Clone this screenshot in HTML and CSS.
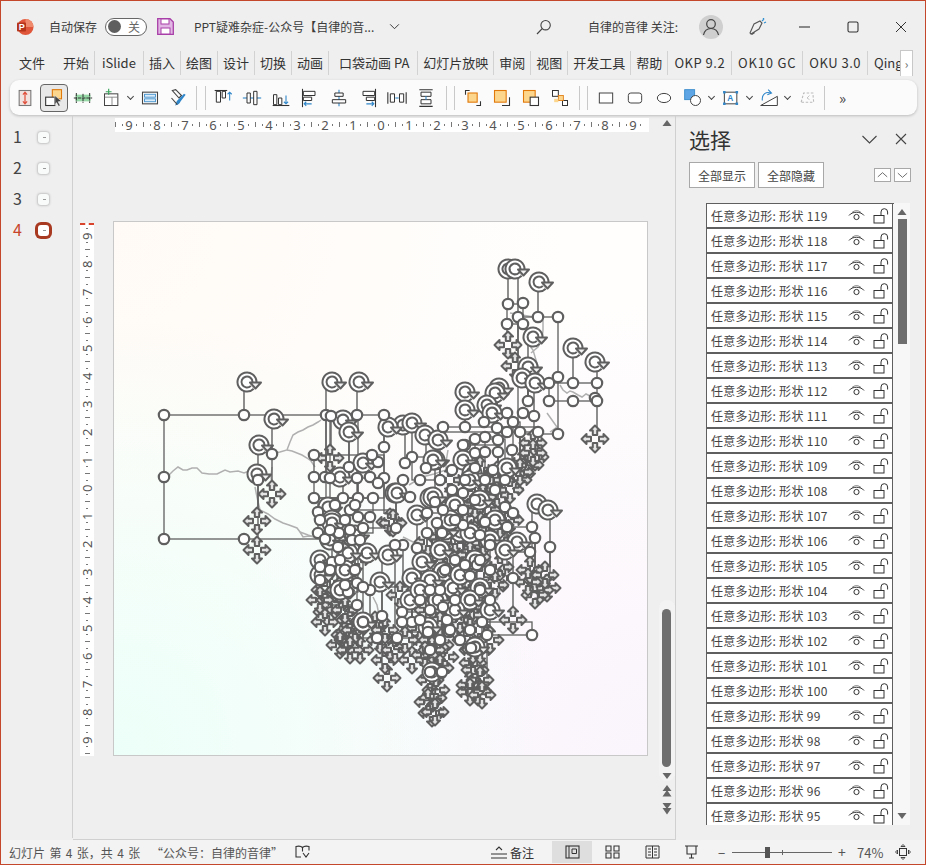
FILE: index.html
```html
<!DOCTYPE html>
<html lang="zh-CN">
<head>
<meta charset="utf-8">
<title>PPT疑难杂症</title>
<link rel="stylesheet" href="styles.css">
</head>
<body>
<svg class="defs" width="0" height="0">
  <defs>
    <symbol id="eye" viewBox="0 0 17 14"><path d="M1 6.5C4 2.2 13 2.2 16 6.5" fill="none" stroke="#333" stroke-width="1"/><path d="M4 3.5C7 1 10 1 13 3.5" fill="none" stroke="#333" stroke-width=".6"/><circle cx="8.5" cy="8" r="2.6" fill="none" stroke="#333" stroke-width="1"/></symbol>
    <symbol id="lock" viewBox="0 0 16 16"><rect x="1" y="7.5" width="10" height="7.5" fill="none" stroke="#333" stroke-width="1"/><path d="M8 7.5V4a3 3 0 0 1 6.6 0v2.5" fill="none" stroke="#333" stroke-width="1"/></symbol>
  </defs>
</svg>
<div class="window">
  <header class="titlebar">
    <svg class="logo" viewBox="0 0 18 18"><circle cx="9.5" cy="9" r="8" fill="#e0563a"/><path d="M9.5 1a8 8 0 0 1 8 8H9.5z" fill="#f08a6c"/><rect x="1" y="4.5" width="9" height="9" rx="1" fill="#b5341a"/><text x="2.8" y="12" class="logo-p">P</text></svg>
    <span class="autosave">自动保存</span>
    <span class="toggle"><i class="knob"></i><span>关</span></span>
    <svg class="save" viewBox="0 0 17 17"><path d="M.7.7H13L16.3 4v12.3H.7z" fill="#e2b6e4" stroke="#a83fa8" stroke-width="1.3"/><rect x="4" y="1" width="8" height="5" fill="#fff" stroke="#a83fa8"/><rect x="4" y="10" width="9" height="6" fill="#fff" stroke="#a83fa8"/></svg>
    <span class="doc-title">PPT疑难杂症-公众号【自律的音...</span>
    <svg class="chev" viewBox="0 0 12 8"><path d="M1 1.500l5 5 5-5" fill="none" stroke="#333" stroke-width="1.100"/></svg>
    <svg class="search" viewBox="0 0 16 16"><circle cx="9.600" cy="6.200" r="4.700" fill="none" stroke="#444" stroke-width="1.100"/><path d="M6.200 9.600L1 15" stroke="#444" stroke-width="1.200"/></svg>
    <span class="follow">自律的音律 关注:</span>
    <span class="avatar"><svg viewBox="0 0 24 24"><circle cx="12" cy="9" r="4.300" fill="none" stroke="#444" stroke-width="1.200"/><path d="M4.500 20c1-5 4-6.500 7.500-6.500s6.500 1.500 7.500 6.500" fill="none" stroke="#444" stroke-width="1.200"/></svg></span>
    <svg class="pen" viewBox="0 0 18 18"><path d="M1 15l4-9 6-3 2 2-3 6-8 5z" fill="none" stroke="#555" stroke-width="1.100"/><path d="M2 16l3-2 1 1-3 2z" fill="#555"/><path d="M13 3l2-2M15 5l2-1M14 1l1-1" stroke="#2f8fd0" stroke-width="1.200"/></svg>
    <svg class="win min" viewBox="0 0 12 12"><path d="M0 6h11" stroke="#333" stroke-width="1.100"/></svg>
    <svg class="win max" viewBox="0 0 12 12"><rect x="1" y="1" width="10" height="10" rx="1.500" fill="none" stroke="#333" stroke-width="1.100"/></svg>
    <svg class="win close" viewBox="0 0 12 12"><path d="M1 1l10 10M11 1L1 11" stroke="#333" stroke-width="1"/></svg>
  </header>

  <nav class="tabs">
    <span class="tab first">文件</span><span class="tab">开始</span><span class="tab islide">iSlide</span><span class="tab">插入</span><span class="tab">绘图</span><span class="tab">设计</span><span class="tab">切换</span><span class="tab">动画</span><span class="tab wide">口袋动画 PA</span><span class="tab">幻灯片放映</span><span class="tab">审阅</span><span class="tab">视图</span><span class="tab">开发工具</span><span class="tab">帮助</span><span class="tab lat">OKP 9.2</span><span class="tab lat ok10">OK10 GC</span><span class="tab lat">OKU 3.0</span><span class="tab clip">Qing</span>
    <span class="tab-more">›</span>
  </nav>

  <div class="toolbar">
    <span class="tb"><svg viewBox="0 0 24 24"><rect x="5" y="3" width="14" height="18" fill="#f1e3e0" stroke="#777" stroke-width="1.300"/><path d="M12 5v14M9.500 8L12 5l2.500 3M9.500 16l2.500 3 2.500-3" fill="none" stroke="#e0503c" stroke-width="1.500"/></svg></span>
    <span class="tb sel"><svg viewBox="0 0 24 24"><rect x="10" y="2" width="11" height="11" fill="#fcd68c" stroke="#e0780a" stroke-width="1.300"/><rect x="2" y="11" width="11" height="10" fill="#fff" stroke="#333" stroke-width="1.300"/><path d="M13 9l8 7-4 .5 2.500 4.500-2 1-2.500-4.500-2 3z" fill="#444" stroke="#fff" stroke-width=".6"/></svg></span>
    <span class="tb"><svg viewBox="0 0 24 24"><rect x="3" y="8" width="18" height="8" fill="#96d9a6"/><path d="M1 12h22M4 6v12M20 6v12M12 7v11" stroke="#333" stroke-width="1.200" stroke-dasharray="4 1"/></svg></span>
    <span class="tb"><svg viewBox="0 0 24 24"><rect x="3" y="7" width="16" height="14" fill="#fff" stroke="#444" stroke-width="1.200"/><path d="M3 11h16M12 11v10" stroke="#777"/><path d="M8 1v7M4.500 4.500h7" stroke="#3ba55c" stroke-width="1.400"/></svg></span>
    <span class="caret"></span>
    <span class="tb"><svg viewBox="0 0 24 24"><rect x="3" y="5" width="18" height="14" fill="none" stroke="#444" stroke-width="1.300"/><rect x="5.500" y="7.500" width="13" height="3.500" fill="#dcecf9" stroke="#2f86c9"/><rect x="5.500" y="13" width="13" height="3.500" fill="#dcecf9" stroke="#2f86c9"/></svg></span>
    <span class="tb"><svg viewBox="0 0 24 24"><path d="M4 3l4-1 7 7-3 3z" fill="none" stroke="#444" stroke-width="1.300"/><path d="M20 8l-6 8c-1 3-4 5-7 5 2-2 1-4 3-6l8-8z" fill="#2f86c9"/><path d="M3 12l7 8" stroke="#444" stroke-width="1.300"/></svg></span>
    <span class="sep s1"></span><span class="sep s2"></span>
    <span class="tb"><svg viewBox="0 0 24 24"><path d="M2 3h15" stroke="#333" stroke-width="1.300"/><path d="M4 4h5v13H4zM11 4h4v8h-4z" fill="#fff" stroke="#333" stroke-width="1.200"/><path d="M20 15V5M17.500 7.500L20 5l2.500 2.500" fill="none" stroke="#2f86c9" stroke-width="1.300"/></svg></span>
    <span class="tb"><svg viewBox="0 0 24 24"><path d="M1 12h22" stroke="#2f86c9" stroke-width="1.300"/><path d="M6 6h4v12H6zM14 4h4v16h-4z" fill="#fff" stroke="#333" stroke-width="1.200"/></svg></span>
    <span class="tb"><svg viewBox="0 0 24 24"><path d="M2 21h20" stroke="#333" stroke-width="1.300"/><path d="M3 8h4v12H3zM9 12h4v8H9z" fill="#fff" stroke="#333" stroke-width="1.200"/><path d="M18 9v10M15.500 16.500L18 19l2.500-2.500" fill="none" stroke="#2f86c9" stroke-width="1.300"/></svg></span>
    <span class="tb"><svg viewBox="0 0 24 24"><path d="M3 1v22" stroke="#333" stroke-width="1.300"/><path d="M4 4h14v5H4zM4 11h10v4H4z" fill="#fff" stroke="#333" stroke-width="1.200"/><path d="M14 19H5M7.500 16.500L5 19l2.500 2.500" fill="none" stroke="#2f86c9" stroke-width="1.300"/></svg></span>
    <span class="tb"><svg viewBox="0 0 24 24"><path d="M12 2v20" stroke="#2f86c9" stroke-width="1.300"/><path d="M7 6h10v4H7zM4 14h16v4H4z" fill="#fff" stroke="#333" stroke-width="1.200"/></svg></span>
    <span class="tb"><svg viewBox="0 0 24 24"><path d="M21 1v22" stroke="#333" stroke-width="1.300"/><path d="M6 4h14v5H6zM10 11h10v4H10z" fill="#fff" stroke="#333" stroke-width="1.200"/><path d="M10 19h9M16.500 16.500L19 19l-2.500 2.500" fill="none" stroke="#2f86c9" stroke-width="1.300"/></svg></span>
    <span class="tb"><svg viewBox="0 0 24 24"><path d="M1 5v14M23 5v14" stroke="#333" stroke-width="1.300"/><path d="M4 7h5v10H4zM15 7h5v10h-5z" fill="#fff" stroke="#333" stroke-width="1.200"/><path d="M10 12h4" stroke="#2f86c9" stroke-width="1.300"/></svg></span>
    <span class="tb"><svg viewBox="0 0 24 24"><path d="M4 2h16M4 22h16" stroke="#333" stroke-width="1.300"/><path d="M6 5h12v5H6zM6 14h12v5H6z" fill="#fff" stroke="#333" stroke-width="1.200"/><path d="M12 10v4" stroke="#2f86c9" stroke-width="1.300"/></svg></span>
    <span class="sep s3"></span><span class="sep s4"></span>
    <span class="tb"><svg viewBox="0 0 24 24"><path d="M3 8V3h5M16 21h5v-5" fill="none" stroke="#333" stroke-width="1.300"/><rect x="6" y="6" width="11" height="11" fill="#fcd68c" stroke="#e0780a" stroke-width="1.300"/></svg></span>
    <span class="tb"><svg viewBox="0 0 24 24"><path d="M21 11v10h-9" fill="none" stroke="#333" stroke-width="1.300"/><rect x="3" y="3" width="14" height="14" fill="#fcd68c" stroke="#e0780a" stroke-width="1.300"/></svg></span>
    <span class="tb"><svg viewBox="0 0 24 24"><rect x="3" y="3" width="14" height="14" fill="#fcd68c" stroke="#e0780a" stroke-width="1.300"/><rect x="11" y="11" width="10" height="10" fill="#fff" stroke="#333" stroke-width="1.300"/></svg></span>
    <span class="tb"><svg viewBox="0 0 24 24"><rect x="3" y="3" width="7" height="7" fill="#fff" stroke="#333" stroke-width="1.200"/><rect x="15" y="15" width="6" height="6" fill="#fff" stroke="#333" stroke-width="1.200"/><rect x="10" y="9" width="6" height="6" fill="#fcd68c" stroke="#e0780a"/><rect x="5" y="13" width="5" height="4" fill="#fcd68c"/></svg></span>
    <span class="sep s5"></span><span class="sep s6"></span>
    <span class="tb"><svg viewBox="0 0 24 24"><rect x="4" y="6" width="16" height="12" fill="#fff" stroke="#444" stroke-width="1.200"/></svg></span>
    <span class="tb"><svg viewBox="0 0 24 24"><rect x="4" y="6" width="16" height="12" rx="3" fill="#fff" stroke="#444" stroke-width="1.200"/></svg></span>
    <span class="tb"><svg viewBox="0 0 24 24"><ellipse cx="12" cy="12" rx="8" ry="5.500" fill="#fff" stroke="#444" stroke-width="1.200"/></svg></span>
    <span class="tb"><svg viewBox="0 0 24 24"><rect x="2" y="2" width="12" height="12" fill="#5da5e4" stroke="#2f86c9"/><circle cx="15" cy="15" r="6" fill="#fff" stroke="#444" stroke-width="1.200"/></svg></span>
    <span class="caret"></span>
    <span class="tb"><svg viewBox="0 0 24 24"><rect x="4" y="5" width="15" height="14" fill="#fff" stroke="#333" stroke-width="1.100"/><path d="M4 5h.01M19 5h.01M4 19h.01M19 19h.01" stroke="#2f86c9" stroke-width="3" stroke-linecap="square"/><text x="7.500" y="16" class="ico-a">A</text></svg></span>
    <span class="caret"></span>
    <span class="tb"><svg viewBox="0 0 24 24"><path d="M2 21h20V10z" fill="#fff" stroke="#444" stroke-width="1.200"/><path d="M4 15C3 7 9 4 14 6M11 2l4 4-5 2" fill="none" stroke="#2f86c9" stroke-width="1.300"/></svg></span>
    <span class="caret"></span>
    <span class="tb"><svg viewBox="0 0 24 24"><path d="M5 17l3-11h11l1 11z" fill="none" stroke="#bbb" stroke-width="1.300" stroke-dasharray="3 2"/><path d="M15 9l-3 3 3 2" fill="none" stroke="#bbb"/></svg></span>
    <span class="sep s7"></span>
    <span class="more">»</span>
  </div>

  <main class="work">
    <aside class="slides">
      <div class="thumb-row"><span>1</span><i class="thumb"></i></div>
      <div class="thumb-row"><span>2</span><i class="thumb"></i></div>
      <div class="thumb-row"><span>3</span><i class="thumb"></i></div>
      <div class="thumb-row active"><span>4</span><i class="thumb"></i></div>
    </aside>

    <section class="editor">
      <div class="canvas-col">
        <div class="hruler"><span>9</span><span>8</span><span>7</span><span>6</span><span>5</span><span>4</span><span>3</span><span>2</span><span>1</span><span>0</span><span>1</span><span>2</span><span>3</span><span>4</span><span>5</span><span>6</span><span>7</span><span>8</span><span>9</span></div>
        <div class="stage">
          <div class="vruler"><span>9</span><span>8</span><span>7</span><span>6</span><span>5</span><span>4</span><span>3</span><span>2</span><span>1</span><span>0</span><span>1</span><span>2</span><span>3</span><span>4</span><span>5</span><span>6</span><span>7</span><span>8</span><span>9</span></div>
          <div class="slide"><svg id="handles" class="handles" viewBox="114 222 533 533"></svg></div>
        </div>
      </div>
      <div class="vscroll">
        <svg class="sb-arrow" viewBox="0 0 10 8"><path d="M5 1l4.500 6H.5z" fill="#666"/></svg>
        <div class="sb-space"></div>
        <div class="sb-track">
          <div class="sb-thumb"></div>
          <svg class="sb-arrow" viewBox="0 0 10 8"><path d="M.5 1h9L5 7z" fill="#666"/></svg>
        </div>
        <svg class="sb-double" viewBox="0 0 10 13"><path d="M5 0l4.500 6H.5zM5 5l4.500 6.500H.5z" fill="#666"/></svg>
        <svg class="sb-double" viewBox="0 0 10 13"><path d="M.5 1h9L5 7zM.5 6h9L5 12.500z" fill="#666"/></svg>
      </div>
    </section>

    <aside class="pane">
      <div class="pane-head">
        <h2>选择</h2>
        <svg class="pane-ico" viewBox="0 0 14 14"><path d="M0 4l7 7 7-7" fill="none" stroke="#444" stroke-width="1.100"/></svg>
        <svg class="pane-ico x" viewBox="0 0 14 14"><path d="M2 2l10 10M12 2L2 12" stroke="#444" stroke-width="1.100"/></svg>
      </div>
      <div class="pane-actions">
        <button class="btn">全部显示</button>
        <button class="btn">全部隐藏</button>
        <span class="order first-order"><svg viewBox="0 0 16 12"><path d="M3 8l5-4.500L13 8" fill="none" stroke="#666"/></svg></span>
        <span class="order"><svg viewBox="0 0 16 12"><path d="M3 4l5 4.500L13 4" fill="none" stroke="#666"/></svg></span>
      </div>
      <div class="list-wrap">
        <ul class="list">
          <li><span>任意多边形: 形状 119</span><svg class="eye"><use href="#eye"/></svg><svg class="lock"><use href="#lock"/></svg></li>
          <li><span>任意多边形: 形状 118</span><svg class="eye"><use href="#eye"/></svg><svg class="lock"><use href="#lock"/></svg></li>
          <li><span>任意多边形: 形状 117</span><svg class="eye"><use href="#eye"/></svg><svg class="lock"><use href="#lock"/></svg></li>
          <li><span>任意多边形: 形状 116</span><svg class="eye"><use href="#eye"/></svg><svg class="lock"><use href="#lock"/></svg></li>
          <li><span>任意多边形: 形状 115</span><svg class="eye"><use href="#eye"/></svg><svg class="lock"><use href="#lock"/></svg></li>
          <li><span>任意多边形: 形状 114</span><svg class="eye"><use href="#eye"/></svg><svg class="lock"><use href="#lock"/></svg></li>
          <li><span>任意多边形: 形状 113</span><svg class="eye"><use href="#eye"/></svg><svg class="lock"><use href="#lock"/></svg></li>
          <li><span>任意多边形: 形状 112</span><svg class="eye"><use href="#eye"/></svg><svg class="lock"><use href="#lock"/></svg></li>
          <li><span>任意多边形: 形状 111</span><svg class="eye"><use href="#eye"/></svg><svg class="lock"><use href="#lock"/></svg></li>
          <li><span>任意多边形: 形状 110</span><svg class="eye"><use href="#eye"/></svg><svg class="lock"><use href="#lock"/></svg></li>
          <li><span>任意多边形: 形状 109</span><svg class="eye"><use href="#eye"/></svg><svg class="lock"><use href="#lock"/></svg></li>
          <li><span>任意多边形: 形状 108</span><svg class="eye"><use href="#eye"/></svg><svg class="lock"><use href="#lock"/></svg></li>
          <li><span>任意多边形: 形状 107</span><svg class="eye"><use href="#eye"/></svg><svg class="lock"><use href="#lock"/></svg></li>
          <li><span>任意多边形: 形状 106</span><svg class="eye"><use href="#eye"/></svg><svg class="lock"><use href="#lock"/></svg></li>
          <li><span>任意多边形: 形状 105</span><svg class="eye"><use href="#eye"/></svg><svg class="lock"><use href="#lock"/></svg></li>
          <li><span>任意多边形: 形状 104</span><svg class="eye"><use href="#eye"/></svg><svg class="lock"><use href="#lock"/></svg></li>
          <li><span>任意多边形: 形状 103</span><svg class="eye"><use href="#eye"/></svg><svg class="lock"><use href="#lock"/></svg></li>
          <li><span>任意多边形: 形状 102</span><svg class="eye"><use href="#eye"/></svg><svg class="lock"><use href="#lock"/></svg></li>
          <li><span>任意多边形: 形状 101</span><svg class="eye"><use href="#eye"/></svg><svg class="lock"><use href="#lock"/></svg></li>
          <li><span>任意多边形: 形状 100</span><svg class="eye"><use href="#eye"/></svg><svg class="lock"><use href="#lock"/></svg></li>
          <li><span>任意多边形: 形状 99</span><svg class="eye"><use href="#eye"/></svg><svg class="lock"><use href="#lock"/></svg></li>
          <li><span>任意多边形: 形状 98</span><svg class="eye"><use href="#eye"/></svg><svg class="lock"><use href="#lock"/></svg></li>
          <li><span>任意多边形: 形状 97</span><svg class="eye"><use href="#eye"/></svg><svg class="lock"><use href="#lock"/></svg></li>
          <li><span>任意多边形: 形状 96</span><svg class="eye"><use href="#eye"/></svg><svg class="lock"><use href="#lock"/></svg></li>
          <li><span>任意多边形: 形状 95</span><svg class="eye"><use href="#eye"/></svg><svg class="lock"><use href="#lock"/></svg></li>
        </ul>
        <div class="list-scroll">
          <svg class="ls-arrow" viewBox="0 0 10 8"><path d="M5 1l4.500 6H.5z" fill="#666"/></svg>
          <div class="ls-thumb"></div>
          <div class="ls-space"></div>
          <svg class="ls-arrow" viewBox="0 0 10 8"><path d="M.5 1h9L5 7z" fill="#666"/></svg>
        </div>
      </div>
    </aside>
  </main>

  <footer class="status">
    <span class="st-count">幻灯片 第 4 张，共 4 张</span>
    <span class="st-quote">“公众号：自律的音律”</span>
    <svg class="st-book" viewBox="0 0 15 14"><path d="M7.500 2.500C6 1 3 1 1 1.500v10.500h5M7.500 2.500C9 1 12 1 14 1.500v4M7.500 2.500v4M8 8l3 4 3-4" fill="none" stroke="#333" stroke-width="1.100"/></svg>
    <span class="st-notes"><svg viewBox="0 0 17 14"><path d="M0 9h16M0 13h16M5 5l3-3 3 3" fill="none" stroke="#333" stroke-width="1.100"/></svg>备注</span>
    <span class="view on"><svg viewBox="0 0 15 14"><rect x="1" y="1" width="13" height="12" fill="none" stroke="#333" stroke-width="1.100"/><path d="M4 1v12M7 4h4.500v4.500H7z" fill="none" stroke="#333"/></svg></span>
    <span class="view"><svg viewBox="0 0 15 14"><path d="M1 1h5v5H1zM9 1h5v5H9zM1 8h5v5H1zM9 8h5v5H9z" fill="none" stroke="#333" stroke-width="1.100"/></svg></span>
    <span class="view"><svg viewBox="0 0 15 14"><path d="M1 1h13v12H1zM7.500 1v12M3 4h3M3 7h3M3 10h3M9 4h3M9 7h3M9 10h3" fill="none" stroke="#333" stroke-width="1"/></svg></span>
    <span class="view"><svg viewBox="0 0 15 14"><path d="M0 1h13M2 1v8h9V1M6.500 9v4M4 13h5" fill="none" stroke="#333" stroke-width="1.100"/></svg></span>
    <span class="zoom-minus">−</span>
    <span class="slider"><i class="tick"></i><i class="grip"></i></span>
    <span class="zoom-plus">+</span>
    <span class="zoom-val">74%</span>
    <svg class="fit" viewBox="0 0 16 16"><rect x="4.500" y="4.500" width="7" height="7" fill="none" stroke="#333"/><path d="M8 .5L6 2.500h4zM8 15.500l-2-2h4zM.5 8l2-2v4zM15.500 8l-2-2v4z" fill="none" stroke="#333" stroke-width=".9"/></svg>
  </footer>
</div>
<script src="app.js"></script>
</body>
</html>
```

FILE: styles.css
```css
* { box-sizing: border-box; }
html, body { margin: 0; padding: 0; }
body {
  width: 926px; height: 865px; overflow: hidden;
  font-family: "Noto Sans CJK SC", "Noto Sans", sans-serif;
  color: #3f3f3f; background: #efefef;
}
.defs { position: absolute; }
.window {
  width: 926px; height: 865px; display: flex; flex-direction: column;
  border: 1px solid #c4472c; background: #efefef; overflow: hidden;
}

/* title bar */
.titlebar { height: 49px; flex: none; display: flex; align-items: center; font-size: 12px; color: #3c3c3c; padding-top: 2px; }
.logo { width: 18px; height: 18px; margin-left: 15px; flex: none; }
.logo-p { font: bold 9px "Liberation Sans", sans-serif; fill: #fff; }
.autosave { margin-left: 15px; width: 48px; white-space: nowrap; }
.toggle { margin-left: 8px; width: 42px; height: 18px; border: 1px solid #666; border-radius: 9px; display: flex; align-items: center; background: #fff; color: #666; }
.knob { width: 13px; height: 13px; border-radius: 50%; background: #5f5f5f; margin-left: 2px; margin-right: 7px; }
.save { width: 17px; height: 17px; margin-left: 10px; flex: none; }
.doc-title { margin-left: 20px; width: 182px; white-space: nowrap; }
.chev { width: 11px; height: 7px; margin-left: 13px; flex: none; }
.search { width: 16px; height: 16px; margin-left: 136px; flex: none; }
.follow { margin-left: 36px; width: 93px; white-space: nowrap; }
.avatar { margin-left: 18px; width: 24px; height: 24px; border-radius: 50%; background: #cfcfcf; display: flex; flex: none; }
.avatar svg { width: 24px; height: 24px; }
.pen { width: 18px; height: 18px; margin-left: 26px; flex: none; }
.win { width: 12px; height: 12px; flex: none; }
.min { margin-left: 32px; }
.max { margin-left: 36px; }
.close { margin-left: 36px; }

/* tabs */
.tabs { height: 26px; flex: none; display: flex; align-items: center; position: relative; font-size: 13px; color: #333; overflow: hidden; }
.tab { height: 24px; line-height: 23px; padding: 0 5px; border-right: 1px solid #d2d2d2; white-space: nowrap; flex: none; }
.tab.first { margin-left: 13px; border-right: 0; padding-right: 13px; }
.tab.islide { padding: 0 7px; }
.tab.wide { padding: 0 8px 0 10px; }
.tab.lat { letter-spacing: .5px; padding: 0 6px; }
.tab.ok10 { letter-spacing: .8px; }
.tab.clip { border-right: 0; padding: 0 0 0 6px; }
.tab-more { position: absolute; left: 899px; top: 0; width: 13px; height: 29px; background: #fff; border: 1px solid #c8c8c8; font-size: 12px; line-height: 26px; text-align: center; color: #666; }

/* toolbar */
.toolbar {
  margin: 4px 8px 0 9px; height: 35px; flex: none; display: flex; align-items: center; gap: 1px;
  background: #fbfbfb; border-radius: 9px; padding-left: 1px; box-shadow: 0 1px 3px rgba(0,0,0,.22);
}
.tb { width: 28px; height: 28px; flex: none; display: flex; align-items: center; justify-content: center; border-radius: 4px; border: 1px solid transparent; }
.tb svg { width: 20px; height: 20px; }
.ico-a { font: bold 10px "Liberation Sans", sans-serif; fill: #2f86c9; }
.tb.sel { background: #e8e8e8; border-color: #666; }
.caret { width: 8px; height: 8px; flex: none; position: relative; }
.caret::before { content: ""; position: absolute; left: 1px; top: 0; width: 4px; height: 4px; border-right: 1px solid #444; border-bottom: 1px solid #444; transform: rotate(45deg); }
.sep { width: 1px; height: 24px; background: #c9c9c9; flex: none; }
.s1 { margin-left: 2px; }
.s2 { margin-left: 7px; margin-right: 2px; }
.s3 { margin-left: 5px; }
.s4 { margin-left: 6px; margin-right: 3px; }
.s5 { margin-left: 4px; }
.s6 { margin-left: 6px; margin-right: 3px; }
.s7 { margin-left: 2px; }
.more { margin-left: 13px; font-size: 15px; color: #444; }

/* work area */
.work { flex: 1; min-height: 0; display: flex; margin-top: 1px; }
.slides { width: 72px; flex: none; border-right: 1px solid #d0d0d0; margin-bottom: 2px; padding-top: 4px; }
.thumb-row { height: 31px; display: flex; align-items: center; padding-left: 12px; font-size: 16px; color: #444; }
.thumb-row span { width: 24px; }
.thumb { width: 11px; height: 11px; background: #f9fbfa; border-radius: 3px; box-shadow: 0 0 2px 1px #c4c4c4; display: block; margin-left: 1px; margin-top: 4px; position: relative; }
.thumb::after { content: ""; position: absolute; left: 5px; top: 5px; width: 3px; height: 1px; background: #999; }
.active { color: #c8452c; }
.active .thumb { background: #fff; box-shadow: 0 0 0 3px #a93a22; }

.editor { width: 603px; flex: none; display: flex; border-right: 1px solid #d0d0d0; border-bottom: 1px solid #d0d0d0; }
.canvas-col { width: 585px; flex: none; padding-top: 2px; }
.hruler { margin-left: 42px; width: 534px; height: 14px; background: #fff; display: flex; font: 13px/14px "Noto Sans", sans-serif; color: #555; }
.hruler span {
  width: 28px; flex: none; text-align: center;
  background:
    linear-gradient(#777, #777) 7px 6px / 1px 2px no-repeat,
    linear-gradient(#777, #777) 21px 6px / 1px 2px no-repeat,
    linear-gradient(#777, #777) 0 4px / 1px 5px no-repeat;
}
.stage { display: flex; margin-top: 91px; padding-left: 7px; }
.vruler { width: 14px; height: 533px; background: #fff; border-top: 2px dashed #d9442c; display: flex; flex-direction: column; font: 13px/14px "Noto Sans", sans-serif; color: #555; }
.vruler span {
  height: 28px; flex: none; display: flex; align-items: center; justify-content: center;
  writing-mode: vertical-rl; transform: rotate(180deg);
  background:
    linear-gradient(#777, #777) 6px 7px / 2px 1px no-repeat,
    linear-gradient(#777, #777) 6px 21px / 2px 1px no-repeat,
    linear-gradient(#777, #777) 4px 0 / 5px 1px no-repeat;
}
.vruler span:first-child { margin-top: -3px; }
.slide {
  width: 535px; height: 535px; margin-left: 19px; margin-top: -2px; flex: none; border: 1px solid #c8c8c8;
  background:
    radial-gradient(circle at 0 100%, #ecfff8 0, rgba(236,255,248,0) 58%),
    radial-gradient(circle at 100% 100%, #faf4fc 0, rgba(250,244,252,0) 60%),
    radial-gradient(circle at 0 0, #fffaf5 0, rgba(255,250,245,0) 60%),
    #fffefd;
}
.handles { display: block; width: 533px; height: 533px; }

.vscroll { width: 17px; flex: none; display: flex; flex-direction: column; align-items: center; padding-top: 3px; }
.sb-arrow { width: 10px; height: 8px; flex: none; display: block; }
.sb-space { height: 483px; flex: none; }
.sb-track { width: 16px; background: #f3f3f3; border-radius: 8px; display: flex; flex-direction: column; align-items: center; padding: 9px 0 3px; height: 181px; flex: none; margin-top: -10px; }
.sb-thumb { width: 9px; height: 158px; background: #6e6e6e; border-radius: 5px; flex: none; margin-bottom: 5px; }
.sb-double { width: 10px; height: 13px; margin-top: 4px; flex: none; }

/* selection pane */
.pane { flex: 1; min-width: 0; padding-left: 13px; }
.pane-head { height: 46px; display: flex; align-items: center; }
.pane-head h2 { margin: 0; font-size: 21px; font-weight: 400; color: #333; width: 173px; }
.pane-ico { width: 15px; height: 14px; flex: none; }
.pane-ico.x { margin-left: 17px; width: 14px; }
.pane-actions { display: flex; align-items: center; height: 26px; }
.btn { width: 66px; height: 26px; padding: 0; margin-right: 3px; background: #fff; border: 1px solid #a8a8a8; border-radius: 0; font: 12px "Noto Sans CJK SC", sans-serif; color: #444; flex: none; }
.order { width: 17px; height: 14px; border: 1px solid #a8a8a8; background: #fff; margin-left: 3px; display: flex; flex: none; }
.first-order { margin-left: 47px; }
.order svg { width: 15px; height: 12px; }
.list-wrap { margin-top: 15px; margin-left: 17px; display: flex; height: 622px; width: 204px; overflow: hidden; background: #f7f7f7; }
.list { list-style: none; margin: 0; padding: 0; width: 188px; flex: none; border-top: 1px solid #5f5f5f; }
.list li { width: 187px; height: 25px; background: #fff; border: 1px solid #5f5f5f; border-bottom: 2px solid #5f5f5f; border-top: 0; display: flex; align-items: center; font-size: 12px; color: #444; padding-left: 4px; }
.list li span { width: 136px; white-space: nowrap; flex: none; letter-spacing: .3px; }
.eye { width: 17px; height: 14px; flex: none; margin-left: 1px; }
.lock { width: 16px; height: 16px; flex: none; margin-left: 8px; }
.list-scroll { width: 16px; flex: none; display: flex; flex-direction: column; align-items: center; padding: 5px 0 5px; }
.ls-arrow { width: 10px; height: 8px; flex: none; }
.ls-thumb { width: 9px; height: 125px; background: #6e6e6e; margin-top: 3px; flex: none; }
.ls-space { flex: 1; }

/* status bar */
.status { height: 24px; flex: none; background: #f3f3f3; display: flex; align-items: center; font-size: 12px; color: #555; }
.st-count { margin-left: 8px; width: 142px; white-space: nowrap; word-spacing: 1.700px; }
.st-quote { width: 144px; white-space: nowrap; }
.st-book { width: 15px; height: 14px; flex: none; }
.st-notes { margin-left: 181px; display: flex; align-items: center; gap: 2px; width: 61px; color: #333; flex: none; }
.st-notes svg { width: 17px; height: 14px; }
.view { width: 40px; height: 22px; display: flex; align-items: center; justify-content: center; flex: none; }
.view svg { width: 15px; height: 14px; }
.view.on { background: #dedede; }
.zoom-minus { margin-left: 6px; width: 12px; font-size: 13px; flex: none; }
.slider { margin-left: 2px; width: 100px; height: 1px; background: #666; position: relative; flex: none; }
.grip { position: absolute; left: 33px; top: -5px; width: 5px; height: 11px; background: #555; }
.tick { position: absolute; left: 50px; top: -2px; width: 1px; height: 5px; background: #666; }
.zoom-plus { margin-left: 3px; width: 14px; text-align: center; font-size: 14px; flex: none; }
.zoom-val { margin-left: 8px; width: 38px; font-size: 13px; flex: none; }
.fit { width: 16px; height: 16px; flex: none; }
```

FILE: app.js
```js
// Selection handles of every polygon on the slide (page coordinates).
var rotates = [[247,382],[332,382],[359,382],[274,419],[259,445],[257,474],[508,269],[515,269],[539,282],[533,337],[573,348],[595,362],[528,367],[522,378],[535,383],[465,392],[465,410],[499,388],[495,393],[487,405],[492,413],[403,425],[412,423],[425,435],[438,440],[435,460],[463,460],[507,468],[472,473],[343,420],[349,432],[363,463],[340,477],[328,507],[332,520],[395,493],[388,427],[350,550],[367,553],[388,555],[433,460],[430,498],[537,504],[548,510],[332,523],[348,553],[380,582],[412,578],[422,562],[443,572],[433,497],[417,515],[397,493],[460,532],[470,533],[517,542],[480,588],[453,588],[438,600],[428,627],[363,622],[320,575],[475,647],[432,672],[320,560],[445,530],[480,500],[495,520],[455,505],[340,540],[475,560],[410,600],[490,610],[450,520],[470,480],[490,540],[505,550],[440,550],[460,575],[430,580],[420,590],[345,570],[330,540],[355,535],[340,590],[470,600],[455,610]];

var circles = [[164,415],[244,415],[326,415],[331,416],[357,415],[384,415],[164,477],[164,539],[244,539],[272,454],[258,480],[314,455],[314,477],[314,498],[325,477],[330,478],[384,447],[384,478],[349,467],[357,478],[370,477],[378,462],[372,455],[378,483],[373,498],[343,498],[358,498],[370,517],[358,517],[318,512],[318,533],[325,539],[339,533],[396,528],[332,562],[320,567],[508,304],[523,303],[507,324],[518,317],[523,324],[538,317],[558,317],[558,377],[549,383],[573,383],[597,383],[549,401],[573,401],[595,398],[597,401],[558,434],[538,432],[528,401],[523,413],[534,416],[507,413],[484,422],[497,428],[513,422],[507,432],[520,432],[485,437],[498,440],[475,439],[465,445],[475,453],[485,452],[498,452],[512,450],[443,427],[465,427],[426,468],[412,457],[405,463],[440,480],[475,468],[485,480],[493,470],[465,480],[463,445],[463,493],[435,502],[463,510],[505,507],[513,513],[443,510],[437,523],[463,525],[485,522],[427,513],[427,533],[442,533],[417,548],[465,565],[477,565],[470,576],[507,527],[532,527],[530,552],[550,547],[535,538],[513,578],[320,580],[357,583],[348,592],[357,605],[370,590],[363,587],[382,616],[363,622],[377,638],[397,638],[402,612],[412,622],[402,622],[420,620],[430,610],[443,607],[447,620],[449,632],[428,632],[482,622],[487,635],[532,635],[430,672],[442,672],[475,647],[471,648],[363,528],[338,547],[352,540],[403,545],[490,545],[452,470],[452,490],[410,497],[420,480],[403,480],[480,535],[455,520],[350,510],[395,545],[475,500],[495,490],[505,480],[455,560],[445,570],[480,560],[490,570],[440,590],[455,600],[470,600],[480,590],[490,600],[430,590],[420,600],[450,630],[470,630],[460,640],[440,640],[430,650],[320,520],[330,530],[345,520],[335,505],[355,505],[350,530],[360,540],[340,560],[355,570],[345,585],[330,570]];

var moves = [[272,494],[257,521],[257,550],[595,439],[508,345],[515,366],[535,457],[523,463],[533,443],[518,480],[330,458],[390,522],[327,612],[325,622],[348,640],[348,633],[387,678],[385,660],[412,660],[390,647],[433,698],[432,713],[475,688],[477,690],[473,663],[513,620],[537,580],[547,588],[503,578],[472,607],[440,645],[445,657],[432,655],[480,607],[477,557],[473,540],[483,543],[460,547],[440,537],[357,560],[330,583],[347,570],[428,542],[393,523],[500,567],[530,465],[533,453],[520,472],[497,475],[497,495],[483,497],[510,490],[487,510],[507,517],[450,480],[425,640],[478,692],[470,685],[432,650],[345,635],[360,650],[330,600],[350,620],[420,590],[460,590],[440,615],[500,540],[455,625],[480,630],[400,595],[375,625],[428,610],[440,625],[420,628],[432,640],[425,655],[440,668],[430,680],[436,690],[428,702],[435,712],[475,670],[480,680],[470,692],[482,695],[473,650],[466,640],[480,650],[490,640],[460,620],[470,615],[450,605],[445,590],[430,590],[465,600],[450,500],[460,510],[470,520],[480,525],[490,530],[500,525],[510,520],[470,495],[480,470],[490,480],[475,505],[465,525],[455,540],[445,555],[435,565],[425,575],[465,570],[480,575],[495,585],[470,555],[325,590],[335,605],[320,600],[340,590],[350,585],[345,610],[355,630],[340,645],[350,650],[380,640],[385,630],[395,650],[405,640],[530,570],[540,590],[545,575],[535,595],[528,582]];

var boxes = [[164,415,326,539],[326,415,384,478],[314,455,384,498],[318,498,373,533],[518,317,558,434],[549,383,597,401],[443,427,538,432],[507,304,523,324],[487,622,532,635],[475,647,471,700],[357,478,358,517],[463,445,498,525],[330,416,358,498],[513,422,520,480],[427,513,463,533],[485,437,498,522],[475,439,505,507],[350,510,396,528],[320,567,357,605],[363,587,412,638],[402,612,449,632],[430,610,443,672],[465,565,477,622],[507,527,532,552],[443,510,463,600],[412,457,440,480],[337,533,358,592]];

var mapLines = [
  "M167,477l6,-6 5,-4 5,3 4,0 5,-2 5,0 5,5 7,1 8,0 8,-4 5,2 8,-1 6,2 8,-3",
  "M272,453l8,-1 7,-2 3,-8 3,-7 5,-3 5,-2 5,-3 5,-2 5,-3 3,-2",
  "M287,450l5,1 5,2 5,2 5,3 4,3 4,6",
  "M255,487l2,10 3,13 8,4 7,5 8,4 6,2 8,3 3,4 3,5 6,-1 8,1",
  "M272,467l-1,10 1,8",
  "M560,385l3,5 4,3 3,-2 3,1 5,3 4,2 4,-3 4,2 8,-1",
  "M510,313l12,2 12,2 9,3 0,10 -1,10 -4,7 -7,6",
  "M547,413l5,7 5,7 -7,5",
  "M448,450l-2,12 0,8 -12,4 -8,2 -9,4 -8,5",
  "M497,600l3,-10 -2,-8 -4,-2 -7,8 -3,10 6,9",
  "M300,532l8,3 9,3 10,-3",
  "M373,597l4,8 2,10 -4,8",
  "M403,537l10,5 8,6 5,10",
  "M525,340l8,10 6,20 -1,12"
];

var NS = "http://www.w3.org/2000/svg";
var svg = document.getElementById("handles");
var INK = "#5f5f5f";

function add(tag, attrs, parent) {
  var el = document.createElementNS(NS, tag);
  for (var k in attrs) el.setAttribute(k, attrs[k]);
  (parent || svg).appendChild(el);
  return el;
}

mapLines.forEach(function (d) {
  add("path", { d: d, fill: "none", stroke: "#b0b0b0", "stroke-width": 1.5 });
});

boxes.forEach(function (b) {
  add("rect", {
    x: Math.min(b[0], b[2]), y: Math.min(b[1], b[3]),
    width: Math.abs(b[2] - b[0]), height: Math.abs(b[3] - b[1]),
    fill: "none", stroke: INK, "stroke-width": 1.3
  });
});

// stems: rotate handle down to the nearest circle under it, circle down to move handle
rotates.forEach(function (p) {
  var best = null;
  circles.forEach(function (c) {
    if (Math.abs(c[0] - p[0]) < 7 && c[1] > p[1] + 8 && (!best || c[1] < best[1])) best = c;
  });
  if (best) add("path", { d: "M" + best[0] + "," + p[1] + "V" + best[1], stroke: INK, "stroke-width": 1.4 });
});
moves.forEach(function (m) {
  var best = null;
  circles.forEach(function (c) {
    if (Math.abs(c[0] - m[0]) < 7 && c[1] < m[1] - 8 && (!best || c[1] > best[1])) best = c;
  });
  if (best) add("path", { d: "M" + best[0] + "," + best[1] + "V" + (m[1] - 8), stroke: INK, "stroke-width": 1.4 });
});

var ARROW = "0,-13.500 5,-8.500 2.200,-8.500 2.200,-4 -2.200,-4 -2.200,-8.500 -5,-8.500";
moves.forEach(function (m) {
  var g = add("g", { transform: "translate(" + m[0] + "," + m[1] + ")" });
  [0, 90, 180, 270].forEach(function (a) {
    add("polygon", { points: ARROW, transform: "rotate(" + a + ")", fill: "#e4e4e4", stroke: INK, "stroke-width": 2, "stroke-linejoin": "round" }, g);
  });
});

var ARC = "M7.500,0A7.500,7.500 0 1 0 5.300,5.300";
rotates.forEach(function (r) {
  var g = add("g", { transform: "translate(" + r[0] + "," + r[1] + ")" });
  add("circle", { r: 4.500, fill: "#fff" }, g);
  add("path", { d: ARC, fill: "none", stroke: INK, "stroke-width": 6 }, g);
  add("path", { d: ARC, fill: "none", stroke: "#fff", "stroke-width": 2 }, g);
  add("polygon", { points: "3,0.500 14,0.500 8.500,6.500", fill: "#f2f2f2", stroke: INK, "stroke-width": 2, "stroke-linejoin": "round" }, g);
});

circles.forEach(function (c) {
  add("circle", { cx: c[0], cy: c[1], r: 5.200, fill: "#fff", stroke: INK, "stroke-width": 2.200 });
});
```
